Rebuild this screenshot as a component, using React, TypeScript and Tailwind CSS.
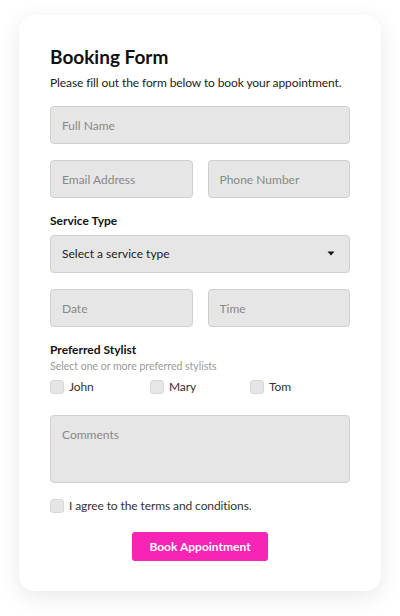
import { useState } from 'react';

const font = { fontFamily: 'Lato, "Noto Sans", sans-serif' };

const inputCls =
  'h-[38px] w-full rounded-[4px] border border-[#cfcfcf] bg-[#e6e6e6] px-[11px] text-[12px] text-[#333] placeholder:text-[#888] outline-none';

function Check({ label }: { label: string }) {
  const [on, setOn] = useState(false);
  return (
    <label className="flex items-center gap-[5px] whitespace-nowrap text-[12px] tracking-[-0.1px] text-[#333] cursor-pointer">
      <span
        onClick={() => setOn(!on)}
        className={`h-[14px] w-[14px] shrink-0 rounded-[3px] border border-[#d9d9d9] ${on ? 'bg-[#f724b5]' : 'bg-[#e6e6e6]'}`}
      />
      {label}
    </label>
  );
}

export default function App() {
  return (
    <div className="min-h-[616px] bg-white pt-[15px] pb-[25px]" style={font}>
      <div className="mx-[19px] rounded-[16px] bg-white px-[31px] pt-[30px] pb-[30px] shadow-[0_6px_24px_rgba(0,0,0,0.09)]">
        <h1 className="text-[19px] font-bold leading-[24px] text-[#111]">Booking Form</h1>
        <p className="mt-[4px] whitespace-nowrap text-[12px] tracking-[-0.1px] leading-[20px] text-[#222]">
          Please fill out the form below to book your appointment.
        </p>

        <input className={`mt-[13px] ${inputCls}`} placeholder="Full Name" />

        <div className="mt-[16px] grid grid-cols-2 gap-[15px]">
          <input className={inputCls} placeholder="Email Address" />
          <input className={inputCls} placeholder="Phone Number" />
        </div>

        <div className="mt-[15px] text-[12px] font-bold leading-[16px] text-[#111]">Service Type</div>
        <div className={`mt-[6px] flex items-center justify-between ${inputCls}`}>
          <span className="text-[#222]">Select a service type</span>
          <svg width="10" height="6" viewBox="0 0 10 6" className="mr-[2px]">
            <path d="M1.5 0.5h7L5 4.5z" fill="#111" />
          </svg>
        </div>

        <div className="mt-[16px] grid grid-cols-2 gap-[15px]">
          <input className={inputCls} placeholder="Date" />
          <input className={inputCls} placeholder="Time" />
        </div>

        <div className="mt-[15px] text-[12px] font-bold leading-[16px] text-[#111]">Preferred Stylist</div>
        <div className="mt-[1px] text-[10.5px] leading-[14px] text-[#999]">
          Select one or more preferred stylists
        </div>
        <div className="mt-[4px] grid h-[20px] grid-cols-3">
          <Check label="John" />
          <Check label="Mary" />
          <Check label="Tom" />
        </div>

        <textarea
          className="mt-[18px] block h-[68px] w-full resize-none rounded-[4px] border border-[#cfcfcf] bg-[#e6e6e6] px-[11px] py-[10px] text-[12px] text-[#333] placeholder:text-[#888] outline-none"
          placeholder="Comments"
        />

        <div className="mt-[14px] h-[20px]">
          <Check label="I agree to the terms and conditions." />
        </div>

        <div className="mt-[15px] flex justify-center">
          <button className="h-[29px] w-[136px] rounded-[3px] bg-[#f724b5] text-[12px] font-bold text-white">
            Book Appointment
          </button>
        </div>
      </div>
    </div>
  );
}
